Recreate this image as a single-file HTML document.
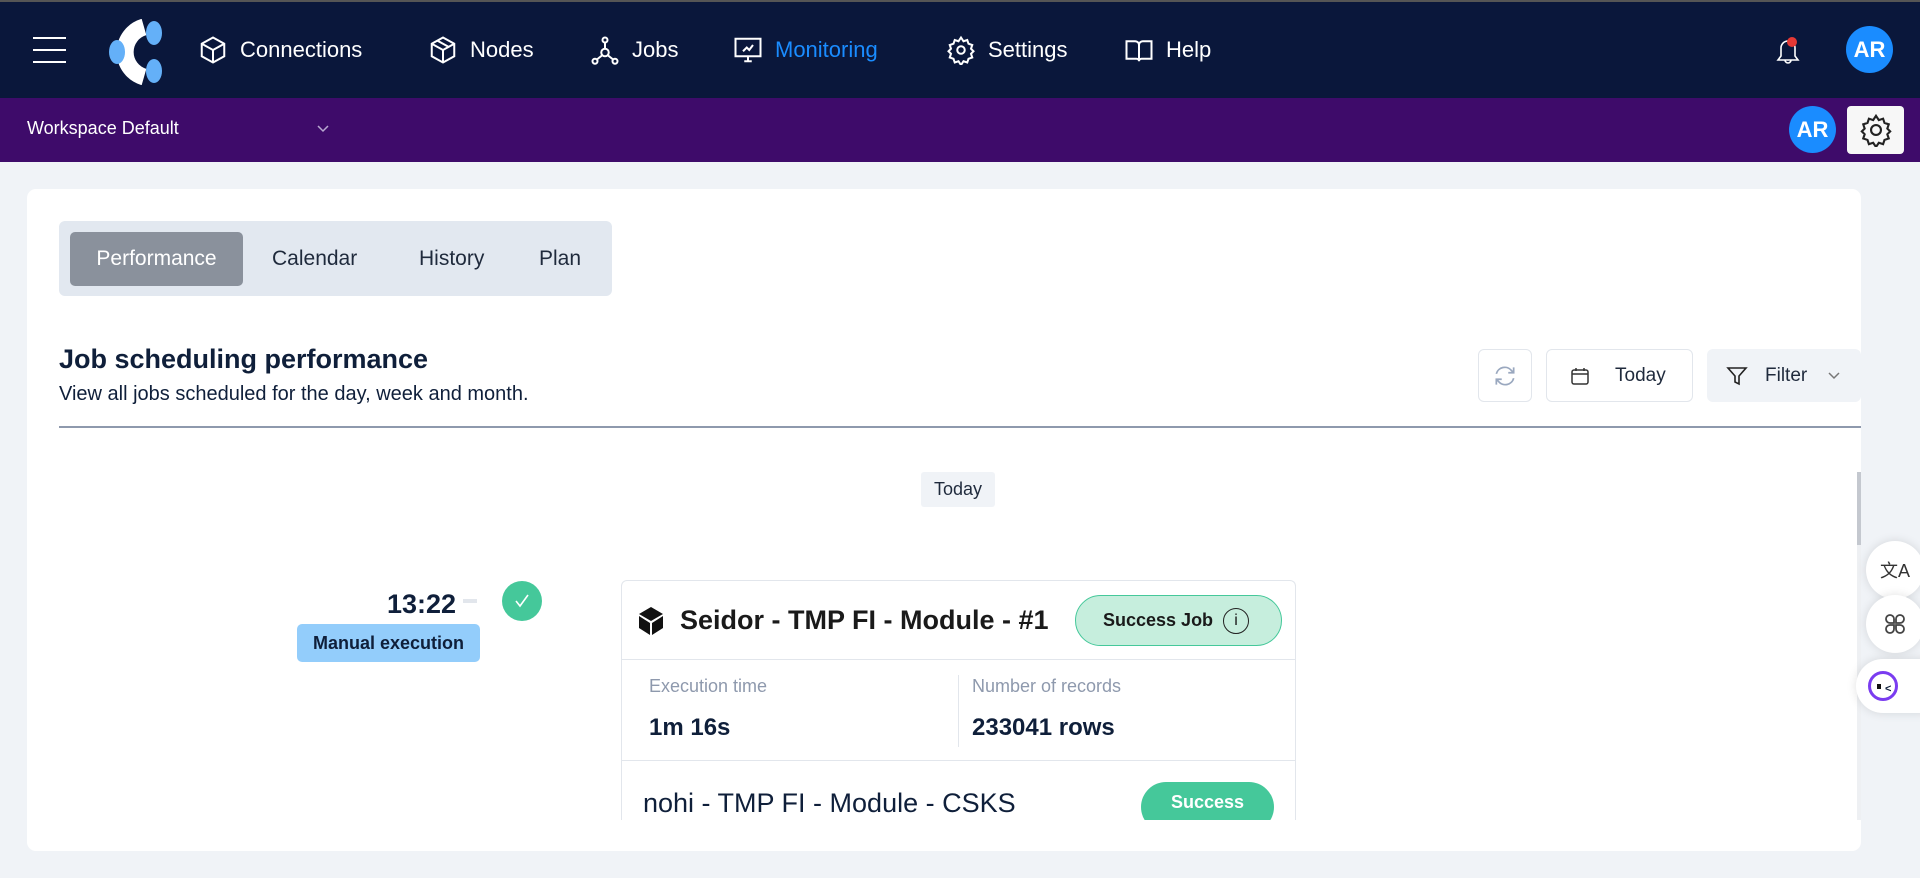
<!DOCTYPE html>
<html><head><meta charset="utf-8"><style>
*{box-sizing:border-box;margin:0;padding:0}
body{width:1920px;height:878px;overflow:hidden;background:#f0f3f7;font-family:"Liberation Sans",sans-serif;position:relative;color:#0f1f3a}
.abs{position:absolute}
.nav{left:0;top:0;width:1920px;height:98px;background:#0a173b;border-top:2px solid #555}
.navi{position:absolute;top:33px;color:#fff;font-size:22px;display:flex;align-items:center;gap:12px;height:30px}
.navi svg{width:30px;height:30px;fill:none;stroke:#fff;stroke-width:1.6}
.purple{left:0;top:98px;width:1920px;height:64px;background:#3e0b6a}
.av{border-radius:50%;background:#1a8cff;color:#fff;font-weight:bold;font-size:22px;display:flex;align-items:center;justify-content:center}
.card{left:27px;top:189px;width:1834px;height:662px;background:#fff;border-radius:9px}
.tab{position:absolute;top:11px;height:54px;font-size:21px;color:#1f2a3c;display:flex;align-items:center}
.btn{position:absolute;top:349px;height:53px;border:1px solid #e2e6ec;border-radius:6px;display:flex;align-items:center;font-size:19px;color:#1f2a3c}
.fb{position:absolute;width:58px;height:58px;border-radius:50%;background:#fff;box-shadow:0 0 10px rgba(0,0,0,.12);display:flex;align-items:center;justify-content:center}
</style></head><body>
<div class="abs nav">
  <div class="abs" style="left:33px;top:35px;width:33px">
    <div style="height:2px;background:#fff;margin-bottom:10px"></div><div style="height:2px;background:#fff;margin-bottom:10px"></div><div style="height:2px;background:#fff"></div></div>
  <svg class="abs" style="left:102px;top:17px" width="66" height="66" viewBox="0 0 66 66">
    <path d="M42 8 A26 26 0 0 0 42 58" fill="none" stroke="#fff" stroke-width="17"/>
    <ellipse cx="52" cy="14" rx="8" ry="12" fill="#64b0f8"/><ellipse cx="52" cy="52" rx="8" ry="12" fill="#64b0f8"/><ellipse cx="15" cy="33" rx="8" ry="12" fill="#64b0f8"/>
  </svg>
  <div class="navi" style="left:198px"><svg viewBox="0 0 24 24"><path d="M12 2l9 5v10l-9 5-9-5V7z M3 7l9 5 9-5 M12 12v10"/></svg>Connections</div>
  <div class="navi" style="left:428px"><svg viewBox="0 0 24 24"><path d="M12 2l9 5v10l-9 5-9-5V7z M3 7l9 5 9-5 M12 12v10 M7.5 4.5l9 5"/></svg>Nodes</div>
  <div class="navi" style="left:590px"><svg viewBox="0 0 24 24"><circle cx="12" cy="4" r="2"/><circle cx="12" cy="14" r="3"/><circle cx="4" cy="21" r="2"/><circle cx="20" cy="21" r="2"/><path d="M12 6v5M10 16l-5 4M14 16l5 4"/></svg>Jobs</div>
  <div class="navi" style="left:733px;color:#1a8cff"><svg viewBox="0 0 24 24"><rect x="2" y="3" width="20" height="14"/><path d="M9 21h6M12 17v4M8 13l3-3 2 2 3-4"/></svg>Monitoring</div>
  <div class="navi" style="left:946px"><svg viewBox="0 0 24 24"><circle cx="12" cy="12" r="3"/><path d="M12 2l2 3 3-1 1 3 3 1-1 3 2 2-2 2 1 3-3 1-1 3-3-1-2 3-2-3-3 1-1-3-3-1 1-3-2-2 2-2-1-3 3-1 1-3 3 1z"/></svg>Settings</div>
  <div class="navi" style="left:1124px"><svg viewBox="0 0 24 24"><path d="M2 5h7a3 3 0 0 1 3 3v13a2 2 0 0 0-2-2H2z M22 5h-7a3 3 0 0 0-3 3v13a2 2 0 0 1 2-2h8z"/></svg>Help</div>
  <svg class="abs" style="left:1772px;top:33px" width="32" height="34" viewBox="0 0 32 34"><path d="M6 25h20l-3-4v-8a7 7 0 0 0-14 0v8z M13 25a3 3 0 0 0 6 0" fill="none" stroke="#fff" stroke-width="1.6"/><circle cx="20" cy="7" r="5" fill="#e53935"/></svg>
  <div class="abs av" style="left:1846px;top:24px;width:47px;height:47px">AR</div>
</div>
<div class="abs purple">
  <div class="abs" style="left:27px;top:20px;color:#fff;font-size:18px">Workspace Default</div>
  <svg class="abs" style="left:316px;top:26px" width="14" height="10" viewBox="0 0 14 10"><path d="M2 2l5 5 5-5" fill="none" stroke="#b8a8d0" stroke-width="1.5"/></svg>
  <div class="abs av" style="left:1789px;top:8px;width:47px;height:47px">AR</div>
  <div class="abs" style="left:1847px;top:8px;width:57px;height:48px;background:#f7f7f7;border-radius:4px;display:flex;align-items:center;justify-content:center">
    <svg width="34" height="34" viewBox="0 0 24 24" fill="none" stroke="#222" stroke-width="1.5"><circle cx="12" cy="12" r="3.5"/><path d="M12 2l2 3 3-1 1 3 3 1-1 3 2 2-2 2 1 3-3 1-1 3-3-1-2 3-2-3-3 1-1-3-3-1 1-3-2-2 2-2-1-3 3-1 1-3 3 1z"/></svg></div>
</div>
<div class="abs card">
  <div class="abs" style="left:32px;top:32px;width:553px;height:75px;background:#e2e8f0;border-radius:6px">
    <div class="tab" style="left:11px;width:173px;background:#8a919c;color:#fff;border-radius:5px;justify-content:center">Performance</div>
    <div class="tab" style="left:213px">Calendar</div>
    <div class="tab" style="left:360px">History</div>
    <div class="tab" style="left:480px">Plan</div>
  </div>
  <div class="abs" style="left:32px;top:155px;font-size:27px;font-weight:bold;color:#0f1f3a">Job scheduling performance</div>
  <div class="abs" style="left:32px;top:194px;font-size:20px;color:#0f1f3a">View all jobs scheduled for the day, week and month.</div>
  <div class="abs" style="left:32px;top:237px;width:1802px;height:2px;background:#8e99ad"></div>
  <div class="btn" style="left:1451px;top:160px;width:54px;justify-content:center"><svg width="26" height="26" viewBox="0 0 24 24" fill="none" stroke="#9aa8bf" stroke-width="1.6"><path d="M4 10a8 8 0 0 1 14-3l2 2M20 14a8 8 0 0 1-14 3l-2-2M20 4v5h-5M4 20v-5h5"/></svg></div>
  <div class="btn" style="left:1519px;top:160px;width:147px;padding-left:23px"><svg width="20" height="20" viewBox="0 0 20 20" fill="none" stroke="#333" stroke-width="1.5"><rect x="2" y="4" width="16" height="14" rx="2"/><path d="M2 8h16M6 2v3M14 2v3"/></svg><span style="margin-left:25px">Today</span></div>
  <div class="btn" style="left:1680px;top:160px;width:154px;border:none;background:#f0f3f7;padding-left:18px"><svg width="24" height="24" viewBox="0 0 24 24" fill="none" stroke="#222" stroke-width="1.6"><path d="M3 4h18l-7 8v8l-4-2v-6z"/></svg><span style="margin-left:16px">Filter</span><svg style="margin-left:20px" width="14" height="10" viewBox="0 0 14 10"><path d="M2 2l5 5 5-5" fill="none" stroke="#777" stroke-width="1.5"/></svg></div>
  <div class="abs" style="left:894px;top:283px;width:74px;height:35px;background:#f0f3f7;border-radius:3px;font-size:18px;display:flex;align-items:center;justify-content:center;color:#1f2a3c">Today</div>
  <div class="abs" style="left:1830px;top:283px;width:4px;height:348px;background:#eef0f3"></div>
  <div class="abs" style="left:1830px;top:283px;width:4px;height:73px;background:#c4c8cf"></div>
  <div class="abs" style="left:360px;top:400px;font-size:27px;font-weight:bold;color:#0f1f3a">13:22</div>
  <div class="abs" style="left:436px;top:410px;width:14px;height:4px;background:#e2e6ec"></div>
  <div class="abs" style="left:475px;top:392px;width:40px;height:40px;border-radius:50%;background:#45c89a;display:flex;align-items:center;justify-content:center"><svg width="20" height="20" viewBox="0 0 20 20"><path d="M4 10l4 5 8-11" fill="none" stroke="#fff" stroke-width="1.6"/></svg></div>
  <div class="abs" style="left:270px;top:435px;width:183px;height:38px;background:#93cdfb;border-radius:5px;font-size:18px;font-weight:bold;display:flex;align-items:center;justify-content:center;color:#0f1f3a">Manual execution</div>
  <div class="abs" style="left:594px;top:391px;width:675px;height:240px;border:1px solid #e2e6ec;border-bottom:none;border-radius:6px 6px 0 0;overflow:hidden">
    <svg class="abs" style="left:15px;top:25px" width="28" height="30" viewBox="0 0 28 30"><path d="M14 1l12 7-12 7-12-7z M2 10l11 7v12L2 22z M26 10l-11 7v12l11-7z" fill="#111"/></svg>
    <div class="abs" style="left:58px;top:24px;font-size:27px;font-weight:bold;color:#1a1a1a">Seidor - TMP FI - Module - #1</div>
    <div class="abs" style="left:453px;top:14px;width:207px;height:51px;background:#c6eedd;border:1px solid #45c89a;border-radius:26px;display:flex;align-items:center;padding-left:27px;font-size:18px;font-weight:bold;color:#1a1a1a">Success Job<span style="margin-left:10px;width:26px;height:26px;border:1.6px solid #222;border-radius:50%;display:inline-flex;align-items:center;justify-content:center;font-size:16px;font-weight:normal">i</span></div>
    <div class="abs" style="left:0;top:78px;width:675px;height:1px;background:#e2e6ec"></div>
    <div class="abs" style="left:27px;top:95px;font-size:18px;color:#8e99ad">Execution time</div>
    <div class="abs" style="left:27px;top:133px;font-size:24px;font-weight:bold;color:#0f1f3a">1m 16s</div>
    <div class="abs" style="left:336px;top:94px;width:1px;height:72px;background:#e2e6ec"></div>
    <div class="abs" style="left:350px;top:95px;font-size:18px;color:#8e99ad">Number of records</div>
    <div class="abs" style="left:350px;top:133px;font-size:24px;font-weight:bold;color:#0f1f3a">233041 rows</div>
    <div class="abs" style="left:0;top:179px;width:675px;height:1px;background:#e2e6ec"></div>
    <div class="abs" style="left:21px;top:207px;font-size:27px;color:#0f1f3a">nohi - TMP FI - Module - CSKS</div>
    <div class="abs" style="left:519px;top:201px;width:133px;height:50px;background:#45c89a;border-radius:25px;color:#fff;font-size:18px;font-weight:bold;display:flex;align-items:center;justify-content:center;padding-bottom:10px">Success</div>
  </div>
</div>
<div class="fb" style="left:1866px;top:541px"><span style="font-size:18px;color:#333;font-family:'Liberation Sans','Noto Sans CJK SC',sans-serif">文A</span></div>
<div class="fb" style="left:1866px;top:595px"><svg width="24" height="24" viewBox="0 0 24 24" fill="none" stroke="#444" stroke-width="1.8"><path d="M11 11H7a4 4 0 1 1 4-4z M13 11h4a4 4 0 1 0-4-4z M11 13H7a4 4 0 1 0 4 4z M13 13h4a4 4 0 1 1-4 4z"/></svg></div>
<div class="abs" style="left:1856px;top:659px;width:70px;height:54px;border-radius:27px 0 0 27px;background:#fff;box-shadow:0 0 10px rgba(0,0,0,.12)"><div class="abs" style="left:12px;top:12px;width:30px;height:30px;border-radius:50%;border:3.5px solid #7a3cf0;background:#fff"><div class="abs" style="left:6px;top:10px;width:4px;height:5px;background:#111"></div><div class="abs" style="left:14px;top:9px;font-size:11px;font-weight:bold">&lt;</div></div></div>
</body></html>
